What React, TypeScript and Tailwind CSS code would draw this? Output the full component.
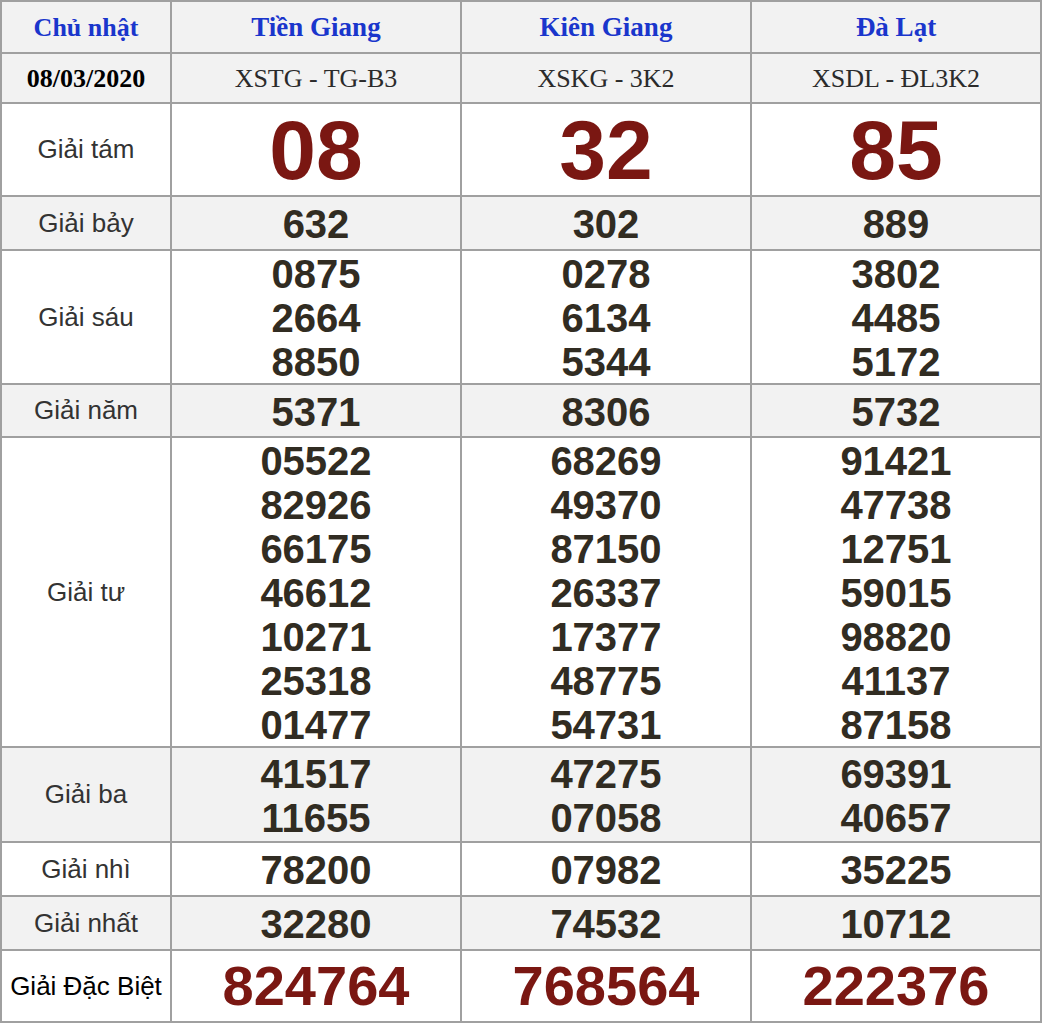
import React from 'react';

type Row = {
  label: string;
  values: string[][];
  height: string;
  kind: 'big' | 'normal' | 'special';
  shaded: boolean;
};

const rows: Row[] = [
  { label: 'Giải tám', values: [['08'], ['32'], ['85']], height: 'h-[93px]', kind: 'big', shaded: false },
  { label: 'Giải bảy', values: [['632'], ['302'], ['889']], height: 'h-[54px]', kind: 'normal', shaded: true },
  {
    label: 'Giải sáu',
    values: [
      ['0875', '2664', '8850'],
      ['0278', '6134', '5344'],
      ['3802', '4485', '5172'],
    ],
    height: 'h-[134px]',
    kind: 'normal',
    shaded: false,
  },
  { label: 'Giải năm', values: [['5371'], ['8306'], ['5732']], height: 'h-[53px]', kind: 'normal', shaded: true },
  {
    label: 'Giải tư',
    values: [
      ['05522', '82926', '66175', '46612', '10271', '25318', '01477'],
      ['68269', '49370', '87150', '26337', '17377', '48775', '54731'],
      ['91421', '47738', '12751', '59015', '98820', '41137', '87158'],
    ],
    height: 'h-[310px]',
    kind: 'normal',
    shaded: false,
  },
  {
    label: 'Giải ba',
    values: [
      ['41517', '11655'],
      ['47275', '07058'],
      ['69391', '40657'],
    ],
    height: 'h-[95px]',
    kind: 'normal',
    shaded: true,
  },
  { label: 'Giải nhì', values: [['78200'], ['07982'], ['35225']], height: 'h-[54px]', kind: 'normal', shaded: false },
  { label: 'Giải nhất', values: [['32280'], ['74532'], ['10712']], height: 'h-[54px]', kind: 'normal', shaded: true },
  { label: 'Giải Đặc Biệt', values: [['824764'], ['768564'], ['222376']], height: 'h-[72px]', kind: 'special', shaded: false },
];

const provinces = [
  { name: 'Tiền Giang', code: 'XSTG - TG-B3' },
  { name: 'Kiên Giang', code: 'XSKG - 3K2' },
  { name: 'Đà Lạt', code: 'XSDL - ĐL3K2' },
];

const cell = 'border-2 border-[#a0a0a0] text-center align-middle p-0';

export default function App() {
  return (
    <div className="w-[1042px] h-[1024px] bg-white overflow-hidden">
      <table className="w-[1040px] border-collapse table-fixed">
        <colgroup>
          <col className="w-[170px]" />
          <col className="w-[290px]" />
          <col className="w-[290px]" />
          <col className="w-[290px]" />
        </colgroup>
        <thead>
          <tr className="h-[52px] bg-[#f2f2f2]">
            <th className={`${cell} font-['Liberation_Serif',serif] text-[26px] font-bold text-[#1a36cc]`}>Chủ nhật</th>
            {provinces.map((p) => (
              <th key={p.name} className={`${cell} font-['Liberation_Serif',serif] text-[27px] font-bold text-[#1a36cc]`}>
                {p.name}
              </th>
            ))}
          </tr>
        </thead>
        <tbody>
          <tr className="h-[50px] bg-[#f2f2f2]">
            <td className={`${cell} font-['Liberation_Serif',serif] text-[26px] font-bold text-black`}>08/03/2020</td>
            {provinces.map((p) => (
              <td key={p.code} className={`${cell} font-['Liberation_Serif',serif] text-[26px] text-[#2b2b2b]`}>
                {p.code}
              </td>
            ))}
          </tr>
          {rows.map((r) => (
            <tr key={r.label} className={`${r.height} ${r.shaded ? 'bg-[#f2f2f2]' : 'bg-white'}`}>
              <td
                className={`${cell} font-['Liberation_Sans',Arial,sans-serif] text-[26px] ${
                  r.kind === 'special' ? 'text-black' : 'text-[#333]'
                }`}
              >
                {r.label}
              </td>
              {r.values.map((vals, i) => (
                <td key={i} className={`${cell} font-['Liberation_Sans',Arial,sans-serif] font-bold`}>
                  {vals.map((v) => (
                    <div
                      key={v}
                      className={
                        r.kind === 'big'
                          ? 'text-[84px] leading-[90px] text-[#7a1712]'
                          : r.kind === 'special'
                          ? 'text-[56px] leading-[66px] text-[#7a1712]'
                          : 'text-[40px] leading-[44px] text-[#312c22] translate-y-[1px]'
                      }
                    >
                      {v}
                    </div>
                  ))}
                </td>
              ))}
            </tr>
          ))}
        </tbody>
      </table>
    </div>
  );
}
